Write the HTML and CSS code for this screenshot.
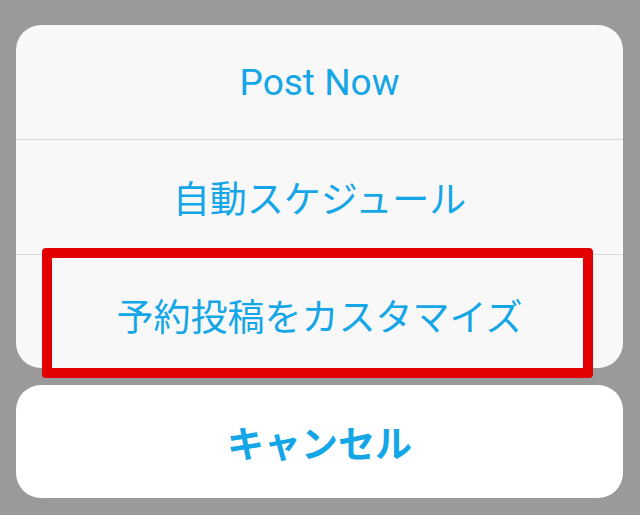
FILE: index.html
```html
<!DOCTYPE html>
<html lang="ja">
<head>
    <meta charset="UTF-8">
    <meta name="viewport" content="width=device-width, initial-scale=1.0">
    <title>Post options</title>
    <link rel="stylesheet" href="styles.css">
</head>
<body>
    <div class="sheet">
        <div class="action-group">
            <div class="action">Post Now</div>
            <div class="action">自動スケジュール</div>
            <div class="action action-marked">
                予約投稿をカスタマイズ
                <div class="highlight"></div>
            </div>
        </div>

        <div class="action-group cancel-group">
            <div class="action action-cancel">キャンセル</div>
        </div>
    </div>
</body>
</html>
```

FILE: styles.css
```css
body {
    margin: 0;
    background-color: #9a9a9a;
    font-family: Roboto, "Noto Sans CJK JP", sans-serif;
}
.sheet {
    display: flex;
    flex-direction: column;
    gap: 17px;
    padding: 25px 17px 0 16px;
}
.action-group {
    background-color: #f8f8f8;
    border-radius: 25px;
}
.action {
    display: flex;
    align-items: center;
    justify-content: center;
    height: 114px;
    color: #14a6e6;
    font-size: 37px;
    border-bottom: 1px solid #d9d9d9;
}
.action:last-child {
    border-bottom: none;
    height: 113px;
}
.action-marked {
    position: relative;
    padding-top: 6px;
    box-sizing: border-box;
}
.highlight {
    position: absolute;
    left: 26px;
    right: 30px;
    top: -7px;
    bottom: -10px;
    border: 10px solid #e30000;
    border-radius: 4px;
}
.cancel-group {
    background-color: #ffffff;
}
.action-cancel {
    font-weight: bold;
}
```
